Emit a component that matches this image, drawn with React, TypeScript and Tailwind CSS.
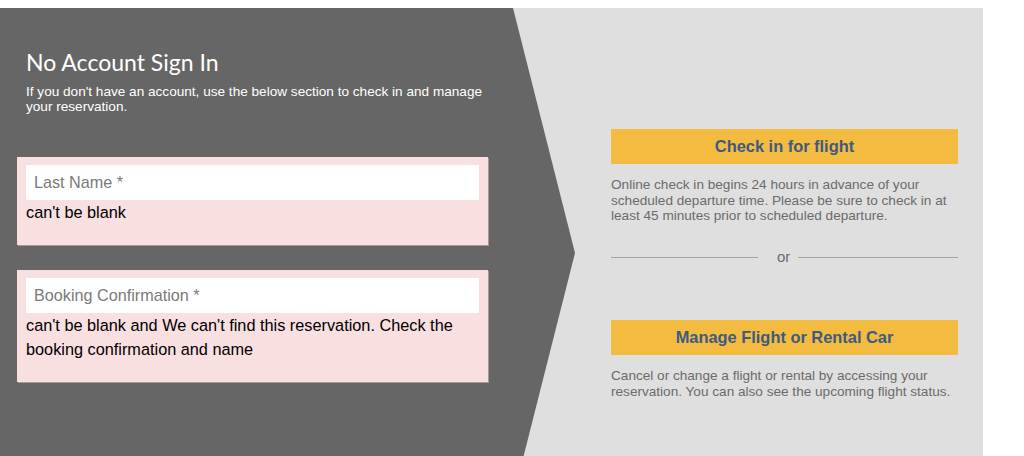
import React from "react";

const arial = { fontFamily: '"Liberation Sans", Arial, sans-serif' };

function ErrorField({ placeholder, error }: { placeholder: string; error: string }) {
  return (
    <div className="bg-[#f8dfe0] pt-2 px-[9px] pb-[21px] shadow-[1px_1px_0_#a89898]">
      <input
        className="w-full h-[35px] bg-white px-2 text-[16.2px] text-black placeholder:text-[#7a7a7a] outline-none"
        placeholder={placeholder}
        style={arial}
      />
      <p className="text-[16.3px] leading-[24px] text-black">{error}</p>
    </div>
  );
}

function ActionBlock({ label, text, className = "" }: { label: string; text: string; className?: string }) {
  return (
    <div className={className}>
      <button className="w-full h-[35px] bg-[#f4bb41] text-[16.4px] font-bold text-[#3d5a80]">{label}</button>
      <p className="mt-[13px] text-[13.6px] leading-[15.7px] text-[#6b6b6b]">{text}</p>
    </div>
  );
}

export default function App() {
  return (
    <div className="w-[1024px] h-[456px] overflow-hidden bg-white pt-2" style={arial}>
      <div className="w-[983px] h-[490px] bg-[#dfdfdf] flex">
        {/* Left: dark chevron panel */}
        <div className="w-[575px] shrink-0 bg-[#666666] pl-[17px] pt-[39px] [clip-path:polygon(0_0,513px_0,100%_50%,513px_100%,0_100%)]">
          <div className="w-[471px]">
            <div className="pl-[9px] w-[470px]">
              <h1
                className="text-[23px] leading-[30px] text-white"
                style={{ fontFamily: 'Lato, "Open Sans", sans-serif' }}
              >
                No Account Sign In
              </h1>
              <p className="mt-[7px] text-[13.6px] leading-[15px] text-white">
                If you don't have an account, use the below section to check in and manage your reservation.
              </p>
            </div>
            <div className="mt-[43px] flex flex-col gap-[25px]">
              <ErrorField placeholder="Last Name *" error="can't be blank" />
              <ErrorField
                placeholder="Booking Confirmation *"
                error="can't be blank and We can't find this reservation. Check the booking confirmation and name"
              />
            </div>
          </div>
        </div>

        {/* Right: actions */}
        <div className="pl-[36px] pt-[121px] w-[383px]">
          <ActionBlock
            label="Check in for flight"
            text="Online check in begins 24 hours in advance of your scheduled departure time. Please be sure to check in at least 45 minutes prior to scheduled departure."
          />
          <div className="mt-[23px] h-[20px] flex items-center">
            <div className="w-[147px] h-px bg-[#a3a3a3]" />
            <span className="ml-[19px] mr-[8px] text-[15px] text-[#6b6b6b]">or</span>
            <div className="flex-1 h-px bg-[#a3a3a3]" />
          </div>
          <ActionBlock
            className="mt-[53px]"
            label="Manage Flight or Rental Car"
            text="Cancel or change a flight or rental by accessing your reservation. You can also see the upcoming flight status."
          />
        </div>
      </div>
    </div>
  );
}
